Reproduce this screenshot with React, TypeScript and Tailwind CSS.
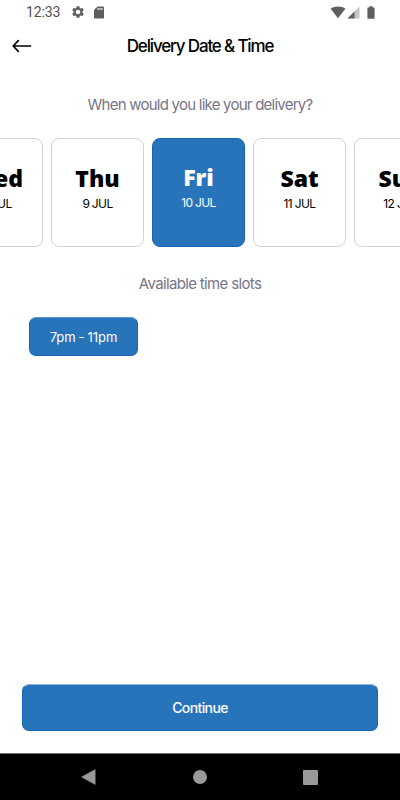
import { FC } from "react";

type Day = {
    name: string;
    date: string;
    selected?: boolean;
}

const days: Day[] = [
    { name: "Wed", date: "8 JUL" },
    { name: "Thu", date: "9 JUL" },
    { name: "Fri", date: "10 JUL", selected: true },
    { name: "Sat", date: "11 JUL" },
    { name: "Sun", date: "12 JUL" },
];

const StatusBar: FC = () => {
    return (
        <div className="flex items-center justify-between h-6 pl-[26px] pr-[25px] text-[#5f5f5f]">
            <div className="flex items-center">
                <span className="w-[45px] font-['Roboto',sans-serif] text-[14px] leading-6 tracking-[-0.15px] text-[#505050]">12:33</span>

                <svg width="14" height="14" viewBox="0 0 24 24" fill="currentColor">
                    <path d="M19.43 12.98c.04-.32.07-.64.07-.98s-.03-.66-.07-.98l2.11-1.65c.19-.15.24-.42.12-.64l-2-3.46c-.12-.22-.39-.3-.61-.22l-2.49 1c-.52-.4-1.08-.73-1.69-.98l-.38-2.65C14.46 2.18 14.25 2 14 2h-4c-.25 0-.46.18-.49.42l-.38 2.65c-.61.25-1.17.59-1.69.98l-2.49-1c-.23-.09-.49 0-.61.22l-2 3.46c-.13.22-.07.49.12.64l2.11 1.65c-.04.32-.07.65-.07.98s.03.66.07.98l-2.11 1.65c-.19.15-.24.42-.12.64l2 3.46c.12.22.39.3.61.22l2.49-1c.52.4 1.08.73 1.69.98l.38 2.65c.03.24.24.42.49.42h4c.25 0 .46-.18.49-.42l.38-2.65c.61-.25 1.17-.59 1.69-.98l2.49 1c.23.09.49 0 .61-.22l2-3.46c.12-.22.07-.49-.12-.64l-2.11-1.65zM12 16a4 4 0 1 1 0-8 4 4 0 0 1 0 8z" />
                </svg>

                <svg className="ml-[9px]" width="10" height="13" viewBox="0 0 10 13">
                    <path d="M3.6.5H9a1 1 0 0 1 1 1v10a1 1 0 0 1-1 1H1a1 1 0 0 1-1-1V4.1z" fill="currentColor" />
                    <path d="M3.6 2h1v2h-1zM5.5 2h1v2h-1zM7.4 2h1v2h-1z" fill="#fff" />
                </svg>
            </div>

            <div className="flex items-center">
                <svg width="16" height="13" viewBox="0 0 16 13">
                    <path d="M8 12.3.6 2.8C2.6 1.2 5.2.4 8 .4s5.4.8 7.4 2.4z" fill="currentColor" />
                </svg>

                <svg className="ml-px" width="13" height="13" viewBox="0 0 13 13">
                    <path d="M12.5.5v12H.5z" fill="#c4c4c4" />
                    <path d="M7.5 5.5v7h-7z" fill="currentColor" />
                </svg>

                <svg className="ml-[7px]" width="8" height="13" viewBox="0 0 8 13">
                    <path d="M2.3.2h3.4v1.3H7a.6.6 0 0 1 .6.6v10.1a.6.6 0 0 1-.6.6H1a.6.6 0 0 1-.6-.6V2.1a.6.6 0 0 1 .6-.6h1.3z" fill="currentColor" />
                </svg>
            </div>
        </div>
    )
}

const Header: FC = () => {
    return (
        <div className="grid grid-cols-[40px_1fr_40px] items-center h-11">
            <button className="pl-3">
                <svg width="20" height="14" viewBox="0 0 20 14" fill="none" stroke="#000" strokeWidth="1.7" strokeLinecap="round" strokeLinejoin="round">
                    <path d="M18.5 7H1.5M6.3 1.7 1.2 7l5.1 5.3" />
                </svg>
            </button>

            <h1 className="pt-0.5 text-center text-[17px] font-medium tracking-[-1.15px]">Delivery Date &amp; Time</h1>
        </div>
    )
}

const DayCard: FC<Day> = ({ name, date, selected }) => {
    return (
        <button className={`flex flex-col items-center shrink-0 w-[93px] h-[109px] rounded-[8px] border ${selected ? 'pt-[24px] bg-[#2774bb] border-[#1465b5] text-white' : 'pt-[25px] bg-white border-[#d3d3d8] text-black'}`}>
            <span className="font-['Open_Sans',sans-serif] text-[23px] leading-7 font-extrabold">{name}</span>
            <span className="mt-1 text-[12px] leading-4 tracking-[-0.6px] [word-spacing:-0.2px]">{date}</span>
        </button>
    )
}

const NavigationBar: FC = () => {
    return (
        <div className="flex items-center h-[47px] pl-[81px] pr-[82px] justify-between bg-black border-t border-t-[#777]">
            <svg width="15" height="16" viewBox="0 0 15 16" fill="#999">
                <path d="M14.2.5v15L.5 8z" stroke="#999" strokeWidth=".5" strokeLinejoin="round" />
            </svg>
            <span className="w-3.5 h-3.5 rounded-full bg-[#999]"></span>
            <span className="w-[15px] h-[15px] rounded-[1px] bg-[#999]"></span>
        </div>
    )
}

const App: FC = () => {
    return (
        <div className="flex flex-col w-[400px] h-[800px] overflow-hidden bg-white font-['Inter',sans-serif] text-black">
            <StatusBar />
            <Header />

            <h2 className="mt-[27px] text-center text-[15px] leading-5 tracking-[-0.76px] text-[#777587]">When would you like your delivery?</h2>

            <div className="flex justify-center gap-2 mt-[23px] -ml-[3px]">
                {days.map(day => <DayCard key={day.date} {...day} />)}
            </div>

            <h2 className="mt-[27px] text-center text-[15px] leading-5 tracking-[-0.65px] text-[#777587]">Available time slots</h2>

            <div className="flex mt-[23px] pl-[29px]">
                <button className="w-[109px] h-[39px] pt-0.5 rounded-[7px] border border-[#1465b5] border-t-[#5b95cb] bg-[#2774bb] text-[13px] tracking-[-0.05px] [word-spacing:-0.6px] text-white">7pm - 11pm</button>
            </div>

            <div className="mt-auto px-[22px] pb-[22px]">
                <button className="w-full h-[47px] rounded-[7px] border border-[#1465b5] border-t-[#8db5dc] bg-[#2774bb] text-[14px] font-medium tracking-[-0.6px] text-white">Continue</button>
            </div>

            <NavigationBar />
        </div>
    )
}

export default App;
